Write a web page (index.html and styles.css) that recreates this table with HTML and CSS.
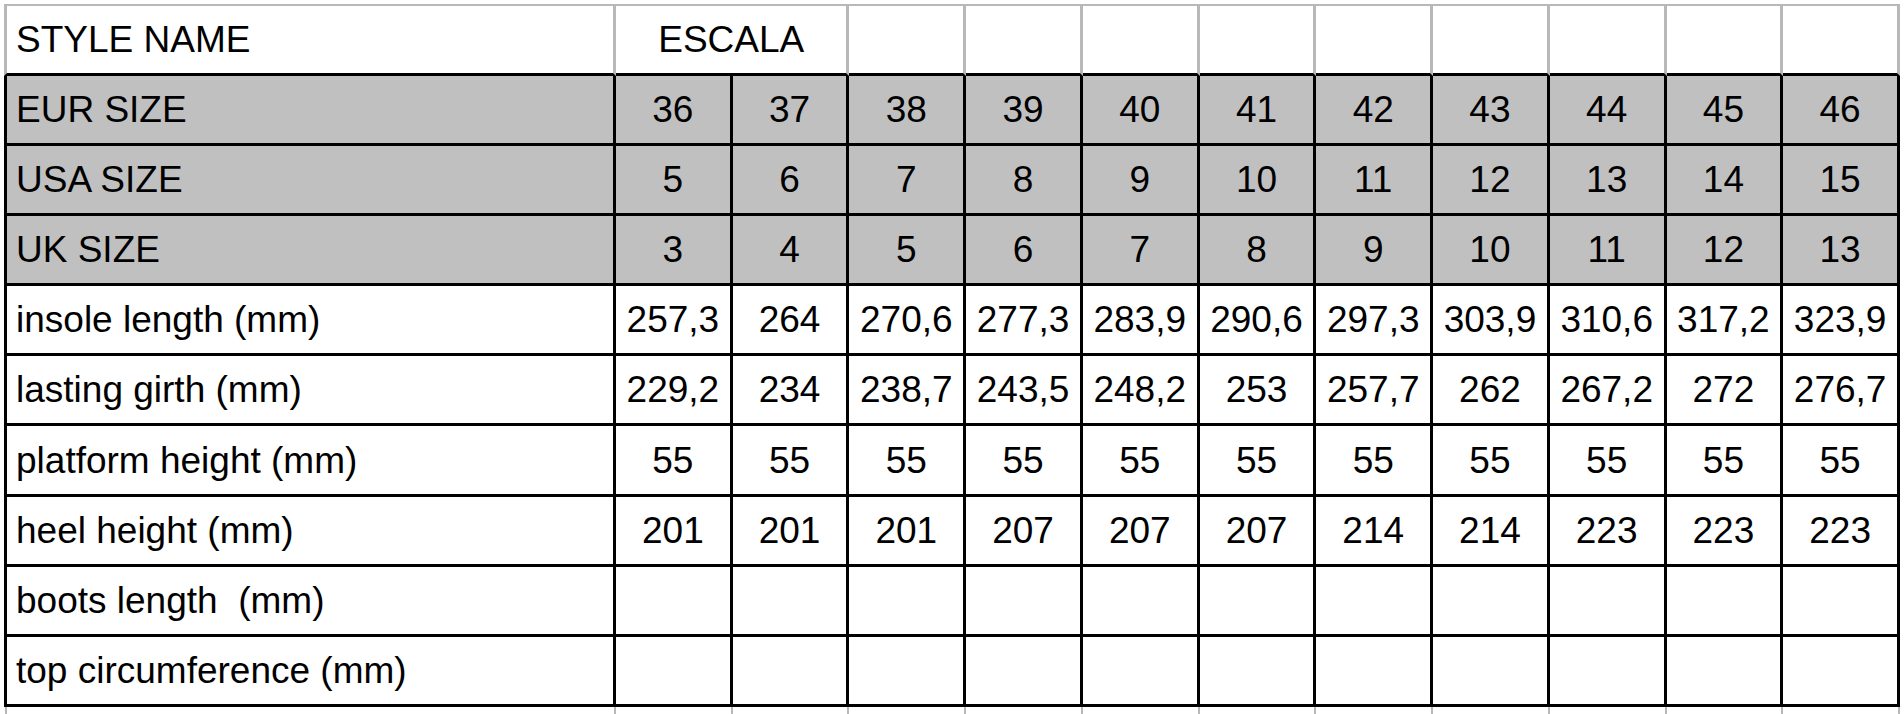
FILE: index.html
```html
<!DOCTYPE html>
<html lang="en">
<head>
<meta charset="utf-8">
<title>Size chart – ESCALA</title>
<link rel="stylesheet" href="styles.css">
</head>
<body>
<div class="sheet">
  <div class="cell top label">STYLE NAME</div>
  <div class="cell top span2">ESCALA</div>
  <div class="cell top"></div><div class="cell top"></div><div class="cell top"></div><div class="cell top"></div><div class="cell top"></div><div class="cell top"></div><div class="cell top"></div><div class="cell top"></div><div class="cell top"></div>

  <div class="cell shade label">EUR SIZE</div>
  <div class="cell shade">36</div><div class="cell shade">37</div><div class="cell shade">38</div><div class="cell shade">39</div><div class="cell shade">40</div><div class="cell shade">41</div><div class="cell shade">42</div><div class="cell shade">43</div><div class="cell shade">44</div><div class="cell shade">45</div><div class="cell shade">46</div>

  <div class="cell shade label">USA SIZE</div>
  <div class="cell shade">5</div><div class="cell shade">6</div><div class="cell shade">7</div><div class="cell shade">8</div><div class="cell shade">9</div><div class="cell shade">10</div><div class="cell shade">11</div><div class="cell shade">12</div><div class="cell shade">13</div><div class="cell shade">14</div><div class="cell shade">15</div>

  <div class="cell shade label">UK SIZE</div>
  <div class="cell shade">3</div><div class="cell shade">4</div><div class="cell shade">5</div><div class="cell shade">6</div><div class="cell shade">7</div><div class="cell shade">8</div><div class="cell shade">9</div><div class="cell shade">10</div><div class="cell shade">11</div><div class="cell shade">12</div><div class="cell shade">13</div>

  <div class="cell label">insole length (mm)</div>
  <div class="cell">257,3</div><div class="cell">264</div><div class="cell">270,6</div><div class="cell">277,3</div><div class="cell">283,9</div><div class="cell">290,6</div><div class="cell">297,3</div><div class="cell">303,9</div><div class="cell">310,6</div><div class="cell">317,2</div><div class="cell">323,9</div>

  <div class="cell label">lasting girth (mm)</div>
  <div class="cell">229,2</div><div class="cell">234</div><div class="cell">238,7</div><div class="cell">243,5</div><div class="cell">248,2</div><div class="cell">253</div><div class="cell">257,7</div><div class="cell">262</div><div class="cell">267,2</div><div class="cell">272</div><div class="cell">276,7</div>

  <div class="cell label">platform height (mm)</div>
  <div class="cell">55</div><div class="cell">55</div><div class="cell">55</div><div class="cell">55</div><div class="cell">55</div><div class="cell">55</div><div class="cell">55</div><div class="cell">55</div><div class="cell">55</div><div class="cell">55</div><div class="cell">55</div>

  <div class="cell label">heel height (mm)</div>
  <div class="cell">201</div><div class="cell">201</div><div class="cell">201</div><div class="cell">207</div><div class="cell">207</div><div class="cell">207</div><div class="cell">214</div><div class="cell">214</div><div class="cell">223</div><div class="cell">223</div><div class="cell">223</div>

  <div class="cell label">boots length&nbsp; (mm)</div>
  <div class="cell"></div><div class="cell"></div><div class="cell"></div><div class="cell"></div><div class="cell"></div><div class="cell"></div><div class="cell"></div><div class="cell"></div><div class="cell"></div><div class="cell"></div><div class="cell"></div>

  <div class="cell label">top circumference (mm)</div>
  <div class="cell"></div><div class="cell"></div><div class="cell"></div><div class="cell"></div><div class="cell"></div><div class="cell"></div><div class="cell"></div><div class="cell"></div><div class="cell"></div><div class="cell"></div><div class="cell"></div>

  <div class="tail first"></div>
  <div class="tail"></div><div class="tail"></div><div class="tail"></div><div class="tail"></div><div class="tail"></div><div class="tail"></div><div class="tail"></div><div class="tail"></div><div class="tail"></div><div class="tail"></div><div class="tail"></div>
</div>
</body>
</html>
```

FILE: styles.css
```css
html, body {
  margin: 0;
  padding: 0;
  background: #ffffff;
}

body {
  font-family: "Liberation Sans", Arial, Helvetica, sans-serif;
  color: #000000;
  overflow: hidden;
}

.sheet {
  display: grid;
  grid-template-columns: 612px repeat(11, 1fr);
  grid-template-rows: 72px repeat(9, 70.1px) 8px;
  width: 1896px;
  margin: 4px 0 0 4px;
}

.cell {
  box-sizing: border-box;
  display: flex;
  align-items: center;
  justify-content: center;
  font-size: 37px;
  line-height: 1;
  white-space: nowrap;
  border-right: 3px solid #000000;
  border-bottom: 3px solid #000000;
  background: #ffffff;
}

.label {
  justify-content: flex-start;
  padding-left: 9px;
  border-left: 3px solid #000000;
}

.shade {
  background: #c0c0c0;
}

.top {
  border-top: 2px solid #b8b8b8;
  border-right-color: #b8b8b8;
}

.top.label {
  border-left-color: #b8b8b8;
}

.span2 {
  grid-column: span 2;
}

.tail {
  box-sizing: border-box;
  border-right: 2px solid #b8b8b8;
}

.tail.first {
  border-left: 2px solid #b8b8b8;
  margin-left: 1px;
}
```
